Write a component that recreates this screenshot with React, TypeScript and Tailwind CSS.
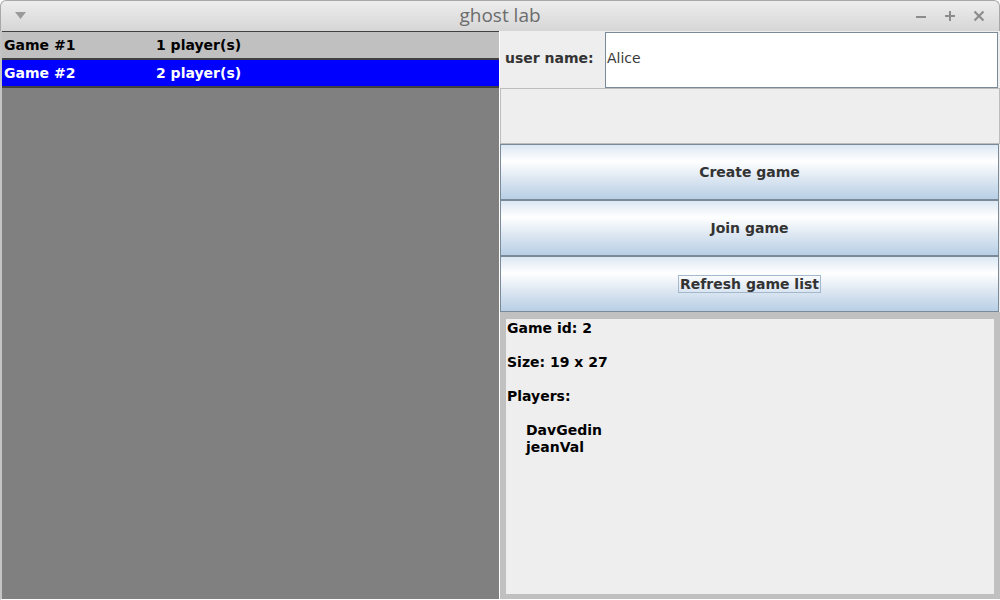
export default function App() {
  const games = [
    { name: 'Game #1', players: '1 player(s)', selected: false },
    { name: 'Game #2', players: '2 player(s)', selected: true },
  ];

  const buttons = [
    { label: 'Create game', focused: false },
    { label: 'Join game', focused: false },
    { label: 'Refresh game list', focused: true },
  ];

  return (
    <div className="w-[1000px] h-[600px] flex flex-col bg-white overflow-hidden font-['DejaVu_Sans',sans-serif]">
      {/* title bar */}
      <div className="h-[31px] shrink-0 rounded-t-[6px] border border-b-0 border-[#a8a8a8] bg-gradient-to-b from-[#ededed] to-[#d6d6d6] grid grid-cols-[1fr_auto_1fr] items-center">
        <div className="pl-[14px]">
          <svg width="11" height="8" viewBox="0 0 11 8">
            <polygon points="0,0 11,0 5.5,7" fill="#9a9a9a" />
          </svg>
        </div>
        <div className="text-[19px] text-[#6c6c6c] font-['Open_Sans',sans-serif] leading-none pb-[1px]">ghost lab</div>
        <div className="flex justify-end items-center gap-[17px] pr-[14px]">
          <svg width="12" height="12" viewBox="0 0 12 12">
            <line x1="1" y1="7" x2="11" y2="7" stroke="#8c8c8c" strokeWidth="2" />
          </svg>
          <svg width="12" height="12" viewBox="0 0 12 12">
            <line x1="1" y1="6" x2="11" y2="6" stroke="#8c8c8c" strokeWidth="2" />
            <line x1="6" y1="1" x2="6" y2="11" stroke="#8c8c8c" strokeWidth="2" />
          </svg>
          <svg width="12" height="12" viewBox="0 0 12 12">
            <line x1="1.5" y1="1.5" x2="10.5" y2="10.5" stroke="#8c8c8c" strokeWidth="2.2" />
            <line x1="10.5" y1="1.5" x2="1.5" y2="10.5" stroke="#8c8c8c" strokeWidth="2.2" />
          </svg>
        </div>
      </div>

      {/* window body */}
      <div className="flex-1 min-h-0 flex flex-col bg-[#a4a4a4]">
        <div className="flex-1 min-h-0 flex border-b border-white bg-[#eeeeee] border-l-2 border-l-[#c4c4c4]">
          {/* game list */}
          <div className="w-[497px] shrink-0 bg-[#808080] border-t border-[#404040] text-[14px] font-bold">
            {games.map((g) => (
              <div
                key={g.name}
                className={`h-[28px] flex items-center pl-[2px] border-b-2 border-[#404040] ${
                  g.selected ? 'bg-[#0000ff] text-white' : 'bg-[#c0c0c0] text-black'
                }`}
              >
                <span className="w-[152px]">{g.name}</span>
                <span>{g.players}</span>
              </div>
            ))}
          </div>

          <div className="w-[1px] shrink-0 bg-white" />

          {/* right column */}
          <div className="w-[500px] shrink-0 flex flex-col bg-[#eeeeee]">
            <div className="h-[57px] shrink-0 flex pt-[1px] pr-[2px]">
              <div className="w-[105px] shrink-0 flex items-center pl-[5px] pb-[3px] text-[14px] font-bold text-[#333333]">user name:</div>
              <div className="flex-1 border border-[#7a8a99] bg-white flex items-center pl-[1px] pb-[3px] text-[14px] text-[#3a3a3a]">Alice</div>
            </div>

            <div className="h-[56px] shrink-0 border border-[#bdbdbd]" />

            {buttons.map((b) => (
              <div
                key={b.label}
                className="h-[56px] shrink-0 mr-[1px] border border-[#7a8a99] bg-[linear-gradient(to_bottom,#dce7f3_0%,#ffffff_30%,#dde7f2_62%,#b8cfe5_100%)] flex items-center justify-center"
              >
                <span
                  className={`text-[14px] font-bold text-[#333333] px-[1px] leading-[16px] border ${
                    b.focused ? 'border-[#a3b8cc]' : 'border-transparent'
                  }`}
                >
                  {b.label}
                </span>
              </div>
            ))}

            {/* game details */}
            <div className="flex-1 min-h-0 bg-[#c0c0c0] pt-[7px] pl-[6px] pr-[6px] pb-[5px]">
              <div className="h-full bg-[#eeeeee] pl-[1px] pt-[1px] text-[14px] font-bold text-black leading-[17px]">
                <div>Game id: 2</div>
                <div>&nbsp;</div>
                <div>Size: 19 x 27</div>
                <div>&nbsp;</div>
                <div>Players:</div>
                <div>&nbsp;</div>
                <div className="pl-[19px]">
                  <div>DavGedin</div>
                  <div>jeanVal</div>
                </div>
              </div>
            </div>
          </div>
        </div>
      </div>
    </div>
  );
}
